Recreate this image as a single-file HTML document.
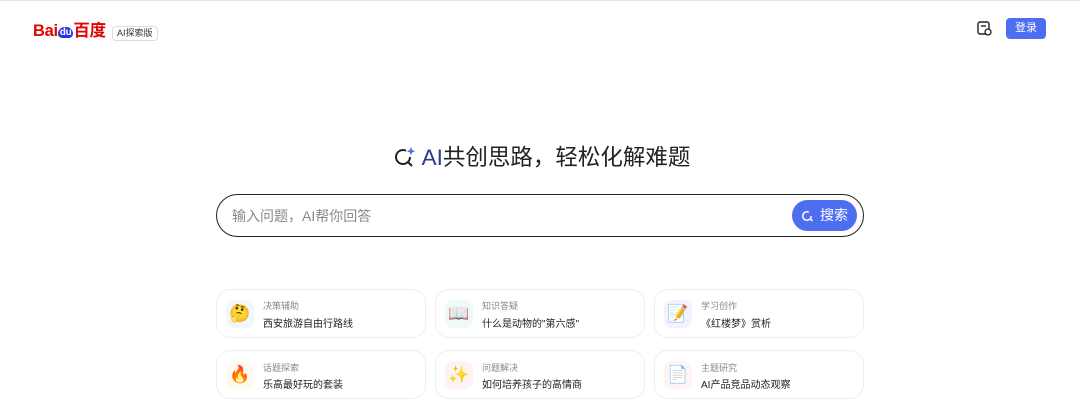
<!DOCTYPE html>
<html><head><meta charset="utf-8"><style>
*{margin:0;padding:0;box-sizing:border-box}
body{width:1080px;height:416px;background:#fff;font-family:"Liberation Sans","Noto Sans CJK SC",sans-serif;position:relative;overflow:hidden}
.topline{position:absolute;left:0;top:0;width:1080px;height:1px;background:#e5e5e5}
.abs{position:absolute}
.logo{left:33px;top:17px;font-weight:bold;font-size:16.5px;color:#e10601;letter-spacing:-0.3px}
.tag{left:112px;top:26px;border:1px solid #ddd;border-radius:4px;font-size:9px;padding:1px 4px;color:#333;line-height:11px}
.login{left:1006px;top:18px;width:40px;height:21px;background:#4e6ef2;border-radius:4px;color:#fff;font-size:11px;text-align:center;line-height:21px}
.title{left:2px;width:1080px;top:140px;text-align:center;font-size:22.5px;color:#222}
.search{left:216px;top:194px;width:648px;height:43px;border:1.5px solid #222;border-radius:22px}
.ph{left:232px;top:206px;font-size:14px;color:#888}
.btn{left:792px;top:200px;width:65px;height:31px;background:#4e6ef2;border-radius:16px;color:#fff;font-size:14px;line-height:31px;padding-left:28px}
.card{width:210px;height:49px;border:1px solid #eee;border-radius:14px}
.ic{width:28px;height:28px;border-radius:8px;font-size:17px;text-align:center;line-height:28px}
.t1{font-size:9px;color:#888}
.t2{font-size:10px;color:#222}
</style></head><body>
<div class="topline"></div>
<div class="abs logo">Bai<span style="display:inline-block;background:#2932e1;color:#fff;border-radius:8px 8px 5px 5px;font-size:10px;padding:0 2px;vertical-align:1px">du</span>百度</div>
<div class="abs tag">AI探索版</div>
<svg class="abs" style="left:977px;top:21px" width="15" height="15" viewBox="0 0 15 15"><rect x="1" y="1" width="11" height="12" rx="2" fill="none" stroke="#222" stroke-width="1.4"/><path d="M4 5h5" stroke="#222" stroke-width="1.4"/><circle cx="11" cy="11" r="3" fill="#fff" stroke="#222" stroke-width="1.3"/></svg>
<div class="abs login">登录</div>
<div class="abs title"><svg width="22" height="22" viewBox="0 0 22 22" style="vertical-align:-3px;margin-right:6px"><circle cx="9" cy="11" r="7" fill="none" stroke="#222" stroke-width="2" stroke-dasharray="36 8"/><path d="M14 16l4 4" stroke="#222" stroke-width="2"/><path d="M17 1l1.2 3 3 1.2-3 1.2-1.2 3-1.2-3-3-1.2 3-1.2z" fill="#4e6ef2"/></svg><span style="color:#2d3a8c">AI</span>共创思路，轻松化解难题</div>
<div class="abs search"></div>
<div class="abs ph">输入问题，AI帮你回答</div>
<div class="abs btn">搜索</div>
<svg class="abs" style="left:801px;top:209px" width="13" height="13" viewBox="0 0 13 13"><circle cx="6" cy="7" r="4.3" fill="none" stroke="#fff" stroke-width="1.5" stroke-dasharray="22 5"/><path d="M9 9.5l2.5 2.5" stroke="#fff" stroke-width="1.5"/></svg>

<div class="abs card" style="left:216px;top:289px"></div>
<div class="abs ic" style="left:226px;top:300px;background:#f1f6ff">🤔</div>
<div class="abs t1" style="left:263px;top:299px">决策辅助</div>
<div class="abs t2" style="left:263px;top:315px">西安旅游自由行路线</div>

<div class="abs card" style="left:435px;top:289px"></div>
<div class="abs ic" style="left:445px;top:300px;background:#effaf5">📖</div>
<div class="abs t1" style="left:482px;top:299px">知识答疑</div>
<div class="abs t2" style="left:482px;top:315px">什么是动物的"第六感"</div>

<div class="abs card" style="left:654px;top:289px"></div>
<div class="abs ic" style="left:664px;top:300px;background:#f6f1ff">📝</div>
<div class="abs t1" style="left:701px;top:299px">学习创作</div>
<div class="abs t2" style="left:701px;top:315px">《红楼梦》赏析</div>

<div class="abs card" style="left:216px;top:350px"></div>
<div class="abs ic" style="left:226px;top:361px;background:#fff9ef">🔥</div>
<div class="abs t1" style="left:263px;top:361px">话题探索</div>
<div class="abs t2" style="left:263px;top:376px">乐高最好玩的套装</div>

<div class="abs card" style="left:435px;top:350px"></div>
<div class="abs ic" style="left:445px;top:361px;background:#fff2f2">✨</div>
<div class="abs t1" style="left:482px;top:361px">问题解决</div>
<div class="abs t2" style="left:482px;top:376px">如何培养孩子的高情商</div>

<div class="abs card" style="left:654px;top:350px"></div>
<div class="abs ic" style="left:664px;top:361px;background:#fff4f4">📄</div>
<div class="abs t1" style="left:701px;top:361px">主题研究</div>
<div class="abs t2" style="left:701px;top:376px">AI产品竞品动态观察</div>
</body></html>
